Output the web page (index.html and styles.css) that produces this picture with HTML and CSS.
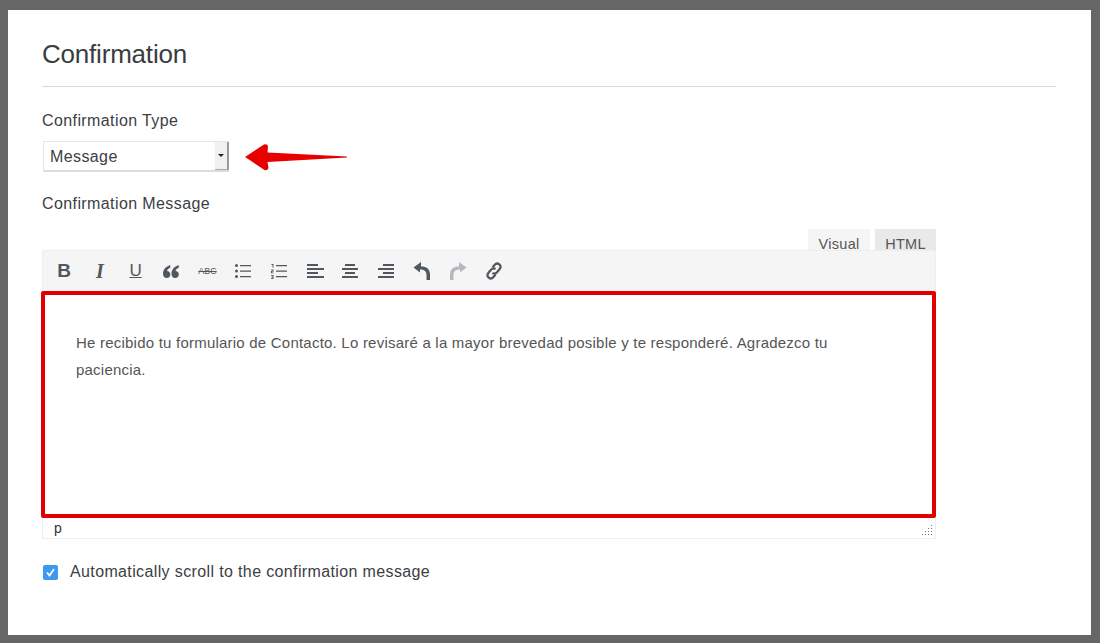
FILE: index.html
```html
<!DOCTYPE html>
<html lang="en">
<head>
  <meta charset="UTF-8">
  <title>Confirmation</title>
  <link rel="stylesheet" href="styles.css">
</head>
<body>
  <div class="card">
    <h2 class="title">Confirmation</h2>
    <div class="label type-label">Confirmation Type</div>
    <div class="select-row">
      <div class="select">
        <span class="select-value">Message</span>
        <span class="select-btn"><span class="caret"></span></span>
      </div>
      <svg class="arrow" width="104" height="30" viewBox="0 0 104 30">
        <path d="M1 15 L20 2.5 Q23 1.5 24 4 L23.5 10.5 L103 14.500 L103 15.500 L23.500 20 L24.500 26 Q23.500 29 20.500 28 Z" fill="#e60000"/>
      </svg>
    </div>
    <div class="label message-label">Confirmation Message</div>
    <div class="editor">
      <div class="tabs">
        <div class="tab tab-active">Visual</div>
        <div class="tab">HTML</div>
      </div>
      <div class="toolbar">
        <span class="tool tool-b">B</span>
        <span class="tool tool-i">I</span>
        <span class="tool tool-u">U</span>
        <svg class="icon" viewBox="0 0 18 18" fill="#50575e"><path d="M8 3C4 4.500 1 7.500 1 11.500 1 14.500 2.500 16 4.700 16 6.800 16 8.300 14.500 8.300 12.500 8.300 10.500 7 9 5 9 5.300 7.500 6.500 6.300 8.500 5.500Z"/><path d="M16.500 3C12.500 4.500 9.500 7.500 9.500 11.500 9.500 14.500 11 16 13.200 16 15.300 16 16.800 14.500 16.800 12.500 16.800 10.500 15.500 9 13.500 9 13.800 7.500 15 6.300 17 5.500Z"/></svg>
        <span class="tool tool-abc">ABC</span>
        <svg class="icon" viewBox="0 0 18 18" fill="#50575e"><circle cx="2.500" cy="3.500" r="1.500"/><circle cx="2.500" cy="9" r="1.500"/><circle cx="2.500" cy="14.500" r="1.500"/><path d="M6 3h11v1.200H6zM6 8.500h11v1.200H6zM6 14h11v1.200H6z"/></svg>
        <svg class="icon" viewBox="0 0 18 18" fill="#50575e"><path d="M1.500 2h2v3.500h-1V3h-1zM1 7.500h2.500v2.200H2v.8h1.500v.8H1V8.900h1.500v-.6H1zM1 13h2.500v4H1v-.8h1.500v-.8H1.500v-.7h1v-.9H1z"/><path d="M6 3h11v1.200H6zM6 8.500h11v1.200H6zM6 14h11v1.200H6z"/></svg>
        <svg class="icon" viewBox="0 0 18 18" fill="#50575e"><path d="M1 2h11v2H1zM1 6h17v2H1zM1 10h11v2H1zM1 14h17v2H1z"/></svg>
        <svg class="icon" viewBox="0 0 18 18" fill="#50575e"><path d="M4 2h10v2H4zM1 14h16v2H1zM4 10h10v2H4zM1 6h16v2H1z"/></svg>
        <svg class="icon" viewBox="0 0 18 18" fill="#50575e"><path d="M6 2h11v2H6zM1 6h16v2H1zM6 10h11v2H6zM1 14h16v2H1z"/></svg>
        <svg class="icon" viewBox="0 0 18 18" fill="#50575e"><path d="M8 0L0.500 5.500 7 10.500V7.500C11 7.500 13.500 9 13.500 13V18H17V12.500C17 7 13.500 4.500 8 4.500Z"/></svg>
        <svg class="icon" viewBox="0 0 18 18" fill="#b4b9be"><path d="M10 0l7.500 5.500-6.500 5V7.500C7 7.500 4.500 9 4.500 13V18H1V12.500C1 7 4.500 4.500 10 4.500Z"/></svg>
        <svg class="icon" viewBox="0 0 18 18" fill="none" stroke="#50575e" stroke-width="2.200"><path d="M7.500 5.500l2-2.500c1.500-1.700 3.500-1.700 4.800-.6 1.400 1.200 1.500 3.200.2 4.800l-2.500 3c-1.400 1.600-3.200 1.700-4.500.6"/><path d="M10.500 12.500l-2 2.500c-1.500 1.700-3.500 1.700-4.800.6-1.400-1.200-1.500-3.200-.2-4.800l2.500-3c1.400-1.600 3.200-1.700 4.500-.6"/></svg>
      </div>
      <div class="editor-body">
        <p>He recibido tu formulario de Contacto. Lo revisaré a la mayor brevedad posible y te responderé. Agradezco tu paciencia.</p>
      </div>
      <div class="statusbar">
        <span>p</span>
        <span class="grip"></span>
      </div>
    </div>
    <div class="check-row">
      <span class="checkbox">
        <svg width="11" height="11" viewBox="0 0 11 11"><path d="M2 5.500l2.500 3L9 2" fill="none" stroke="#fff" stroke-width="1.800"/></svg>
      </span>
      <span class="check-label">Automatically scroll to the confirmation message</span>
    </div>
  </div>
</body>
</html>
```

FILE: styles.css
```css
html, body {
  height: 100%;
}
body {
  margin: 0;
  padding: 10px 9px 8px 8px;
  box-sizing: border-box;
  background-color: #666;
  font-family: "Liberation Sans", Arial, sans-serif;
  color: #3c4043;
  overflow: hidden;
}
.card {
  height: 100%;
  box-sizing: border-box;
  background-color: #fff;
  padding: 0 35px 0 34px;
}
.title {
  margin: 0;
  padding: 27px 0 0;
  height: 77px;
  box-sizing: border-box;
  font-size: 26px;
  line-height: 34px;
  font-weight: 400;
  color: #3a3d40;
  letter-spacing: -0.2px;
  border-bottom: 1px solid #d8d8d8;
}
.label {
  font-size: 16px;
  line-height: 20px;
  letter-spacing: 0.4px;
  color: #3c4043;
}
.type-label {
  margin-top: 24px;
}
.select-row {
  display: flex;
  align-items: center;
  margin-top: 10px;
  height: 31px;
}
.select {
  width: 186px;
  height: 31px;
  box-sizing: border-box;
  display: flex;
  align-items: center;
  justify-content: space-between;
  border: 1px solid #e6e6e6;
  border-right: none;
  border-bottom: 2px solid #dcdcdc;
  margin-left: 1px;
}
.select-value {
  font-size: 16px;
  letter-spacing: 0.4px;
  padding: 1px 0 0 6px;
}
.select-btn {
  width: 14px;
  height: 100%;
  box-sizing: border-box;
  display: flex;
  align-items: center;
  justify-content: center;
  background-color: #f0f0f0;
  border-right: 2px solid #999;
  border-bottom: 1px solid #aaa;
}
.caret {
  width: 0;
  height: 0;
  border-left: 3px solid transparent;
  border-right: 3px solid transparent;
  border-top: 3px solid #222;
}
.arrow {
  margin-left: 15px;
}
.message-label {
  margin-top: 22px;
}
.editor {
  width: 894px;
  margin-top: 15px;
}
.tabs {
  display: flex;
  justify-content: flex-end;
  gap: 5px;
  height: 21px;
}
.tab {
  height: 21px;
  box-sizing: border-box;
  padding-top: 8px;
  text-align: center;
  font-size: 14.500px;
  line-height: 14px;
  color: #555;
  background-color: #e9e9e9;
  letter-spacing: 0.3px;
}
.tab-active {
  width: 62px;
  background-color: #f5f5f5;
}
.tab:last-child {
  width: 61px;
}
.toolbar {
  display: flex;
  align-items: center;
  gap: 17.800px;
  height: 41px;
  box-sizing: border-box;
  padding-left: 12px;
  background-color: #f5f5f5;
  border: 1px solid #eee;
  border-bottom: none;
}
.tool {
  width: 18px;
  flex-shrink: 0;
  text-align: center;
  color: #50575e;
  font-size: 19px;
  line-height: 18px;
}
.tool-b {
  font-weight: 700;
}
.tool-i {
  font-family: "Liberation Serif", serif;
  font-style: italic;
  font-weight: 700;
  font-size: 20px;
}
.tool-u {
  text-decoration: underline;
  font-size: 17px;
}
.tool-abc {
  font-size: 9px;
  text-decoration: line-through;
}
.icon {
  width: 18px;
  height: 18px;
  flex-shrink: 0;
}
.editor-body {
  height: 227px;
  box-sizing: border-box;
  margin-left: -1px;
  border: 4px solid #e00000;
  border-radius: 2px;
  padding: 34px 45px 0 31px;
  background-color: #fff;
}
.editor-body p {
  margin: 0;
  font-size: 15px;
  line-height: 27px;
  letter-spacing: 0.22px;
  color: #555;
}
.statusbar {
  position: relative;
  height: 21px;
  box-sizing: border-box;
  padding-left: 11px;
  font-size: 14px;
  line-height: 20px;
  color: #333;
  border: 1px solid #eee;
  border-top: none;
}
.grip {
  position: absolute;
  right: 3px;
  bottom: 3px;
  width: 11px;
  height: 11px;
  background-image: radial-gradient(#777 0.8px, transparent 1px);
  background-size: 3px 3px;
  clip-path: polygon(100% 0, 100% 100%, 0 100%);
}
.check-row {
  display: flex;
  align-items: center;
  margin-top: 23px;
  margin-left: 1px;
}
.checkbox {
  width: 15px;
  height: 15px;
  border-radius: 2px;
  background-color: #3b99f0;
  display: flex;
  align-items: center;
  justify-content: center;
}
.check-label {
  margin-left: 12px;
  font-size: 16px;
  line-height: 20px;
  letter-spacing: 0.37px;
}
```
